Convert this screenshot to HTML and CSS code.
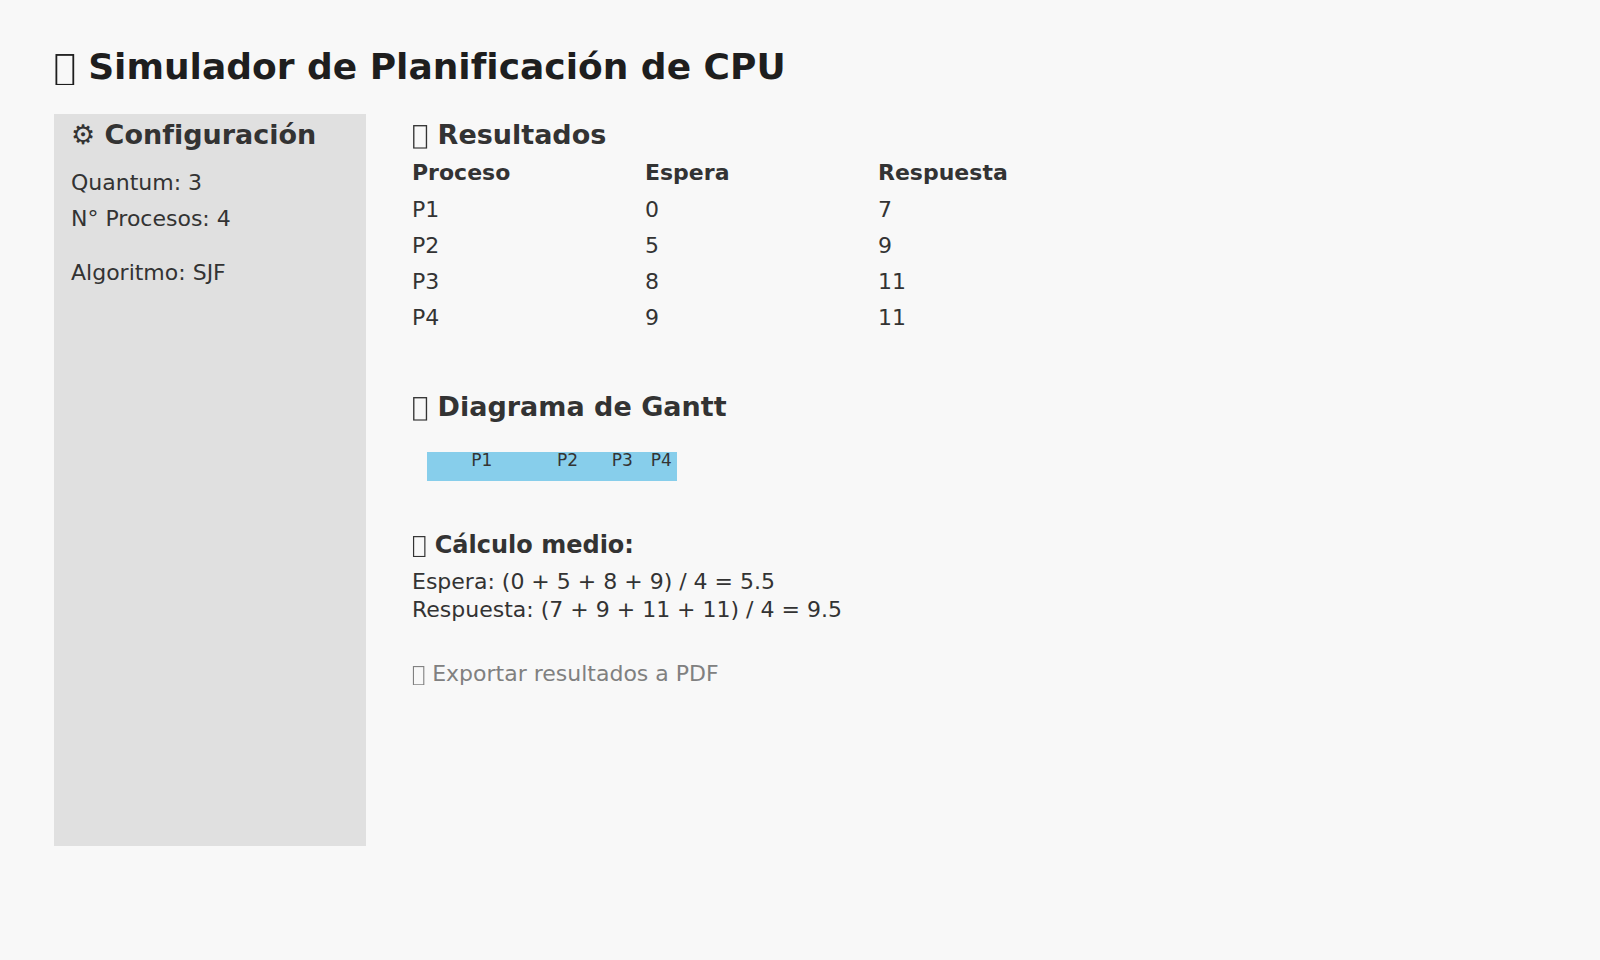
FILE: index.html
```html
<!DOCTYPE html>
<html lang="es">
<head>
<meta charset="utf-8">
<meta name="viewport" content="width=device-width, initial-scale=1">
<title>Simulador de Planificación de CPU</title>
<link rel="stylesheet" href="styles.css">
</head>
<body>
<svg class="symbols" aria-hidden="true">
  <symbol id="box" viewBox="0 0 600 882"><rect x="66" y="26" width="470" height="830" fill="none" stroke="currentColor" stroke-width="50"/></symbol>
</svg>
<div class="page">
  <h1 class="title"><svg class="icon" aria-hidden="true"><use href="#box"/></svg> Simulador de Planificación de CPU</h1>
  <div class="layout">
    <aside class="sidebar">
      <h2 class="heading"><span class="gear">⚙</span> Configuración</h2>
      <div class="settings">
        <p class="setting">Quantum: 3</p>
        <p class="setting">N° Procesos: 4</p>
        <p class="setting algorithm">Algoritmo: SJF</p>
      </div>
    </aside>
    <main class="content">
      <section>
        <h2 class="heading" id="results"><svg class="icon" aria-hidden="true"><use href="#box"/></svg> Resultados</h2>
        <table class="results" aria-labelledby="results">
          <thead><tr><th scope="col">Proceso</th><th scope="col">Espera</th><th scope="col">Respuesta</th></tr></thead>
          <tbody>
            <tr><td>P1</td><td>0</td><td>7</td></tr>
            <tr><td>P2</td><td>5</td><td>9</td></tr>
            <tr><td>P3</td><td>8</td><td>11</td></tr>
            <tr><td>P4</td><td>9</td><td>11</td></tr>
          </tbody>
        </table>
      </section>
      <section class="diagram">
        <h2 class="heading"><svg class="icon" aria-hidden="true"><use href="#box"/></svg> Diagrama de Gantt</h2>
        <div class="gantt">
          <span class="slot" style="flex-grow:7">P1</span>
          <span class="slot" style="flex-grow:4">P2</span>
          <span class="slot" style="flex-grow:3">P3</span>
          <span class="slot" style="flex-grow:2">P4</span>
        </div>
      </section>
      <section class="averages">
        <h3 class="subheading"><svg class="icon" aria-hidden="true"><use href="#box"/></svg> Cálculo medio:</h3>
        <p class="formula">Espera: (0 + 5 + 8 + 9) / 4 = 5.5</p>
        <p class="formula">Respuesta: (7 + 9 + 11 + 11) / 4 = 9.5</p>
      </section>
      <button class="export" type="button"><svg class="icon" aria-hidden="true"><use href="#box"/></svg> Exportar resultados a PDF</button>
    </main>
  </div>
</div>
</body>
</html>
```
FILE: styles.css
```css
* { box-sizing: border-box; }

body {
  margin: 0;
  background: #f8f8f8;
  color: #333;
  font: 22px/28px "DejaVu Sans", sans-serif;
}

h1, h2, h3, p { margin: 0; }

.symbols { position: absolute; width: 0; height: 0; }

.page {
  display: flex;
  flex-direction: column;
  min-height: 100vh;
  padding: 46px 54px 114px;
}

.title {
  margin-bottom: 26px;
  color: #1e1e1e;
  font-size: 36px;
  line-height: 42px;
}

.icon {
  width: 0.6em;
  height: 0.882em;
  vertical-align: -0.177em;
}

.layout {
  display: flex;
  flex: 1;
  gap: 46px;
}

.sidebar {
  flex: 0 0 312px;
  padding: 5px 17px;
  background: #e0e0e0;
}

.content { flex: 1; padding-top: 5px; }

.heading { font-size: 27px; line-height: 32px; }
.gear { font-weight: 400; }

.settings { margin-top: 14px; }
.setting { line-height: 36px; }
.algorithm { margin-top: 18px; }

.results {
  width: 699px;
  margin-top: 4px;
  border-collapse: collapse;
  table-layout: fixed;
  line-height: 36px;
  text-align: left;
}
.results th, .results td { padding: 0; }
.results th { padding-bottom: 1px; }

.diagram { margin-top: 55px; }

.gantt {
  display: flex;
  width: 250px;
  height: 29px;
  margin: 29px 0 0 15px;
  background: #87ceeb;
}

.slot {
  flex-basis: 0;
  font-size: 17px;
  line-height: 17px;
  text-align: center;
}

.averages { margin-top: 50px; }

.subheading {
  margin-bottom: 9px;
  font-size: 24px;
  line-height: 28px;
}

.export {
  margin-top: 36px;
  padding: 0;
  border: 0;
  background: none;
  color: #808080;
  font: inherit;
  cursor: pointer;
}
```
